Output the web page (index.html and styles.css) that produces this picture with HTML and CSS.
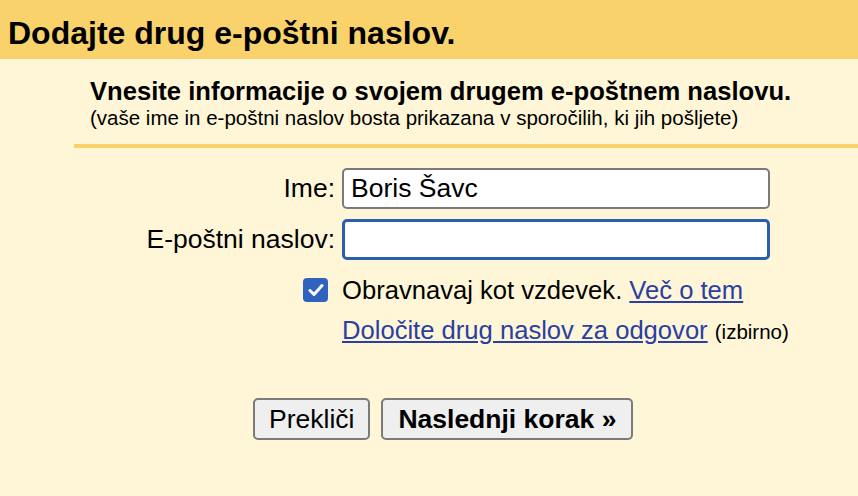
FILE: index.html
```html
<!DOCTYPE html>
<html lang="sl">
<head>
  <meta charset="UTF-8">
  <title>Dodajte drug e-poštni naslov</title>
  <link rel="stylesheet" href="styles.css">
</head>
<body>
  <h1 class="title">Dodajte drug e-poštni naslov.</h1>

  <div class="intro">
    <h2>Vnesite informacije o svojem drugem e-poštnem naslovu.</h2>
    <p>(vaše ime in e-poštni naslov bosta prikazana v sporočilih, ki jih pošljete)</p>
  </div>

  <form class="form">
    <div class="row">
      <label class="label" for="name">Ime:</label>
      <input class="field" type="text" id="name" value="Boris Šavc">
    </div>
    <div class="row">
      <label class="label" for="email">E-poštni naslov:</label>
      <input class="field focused" type="text" id="email">
    </div>
    <div class="row check-row">
      <div class="label">
        <span class="checkbox">
          <svg width="16" height="14" viewBox="0 0 16 14"><path d="M2 7.5 L6 11.5 L14 2.5" fill="none" stroke="#fff" stroke-width="3" stroke-linecap="round" stroke-linejoin="round"/></svg>
        </span>
      </div>
      <div class="text">Obravnavaj kot vzdevek. <a href="#">Več o tem</a></div>
    </div>
    <div class="row link-row">
      <div class="label"></div>
      <div class="text"><a href="#">Določite drug naslov za odgovor</a> <small>(izbirno)</small></div>
    </div>

    <div class="buttons">
      <button type="button">Prekliči</button>
      <button type="button" class="primary">Naslednji korak »</button>
    </div>
  </form>
</body>
</html>
```

FILE: styles.css
```css
body {
  margin: 0;
  font-family: "Liberation Sans", Arial, sans-serif;
  background: #fef6d7;
  color: #000;
  height: 496px;
  overflow: hidden;
}

.title {
  margin: 0;
  background: #f9d26b;
  height: 59px;
  padding: 4px 0 0 8px;
  font-size: 32px;
  font-weight: bold;
  line-height: 58px;
  box-sizing: border-box;
  white-space: nowrap;
  overflow: hidden;
}

.intro {
  margin-left: 74px;
  padding: 17px 0 0 16px;
  height: 68px;
  border-bottom: 4px solid #f8d26a;
  white-space: nowrap;
}

.intro h2 {
  margin: 0;
  font-size: 25.6px;
  line-height: 30px;
}

.intro p {
  margin: 0;
  font-size: 20.5px;
  line-height: 24px;
}

.form {
  padding-top: 20px;
}

.row {
  display: flex;
  align-items: center;
  gap: 7px;
  margin-bottom: 10px;
  white-space: nowrap;
}

.label {
  width: 335px;
  text-align: right;
  font-size: 26.5px;
  flex-shrink: 0;
}

.field {
  width: 428px;
  height: 41px;
  box-sizing: border-box;
  border: 2px solid #7a7a7a;
  border-radius: 5px;
  background: #fff;
  font-family: inherit;
  font-size: 26.5px;
  padding: 0 7px;
  outline: none;
}

.field.focused {
  border: 3px solid #2b5fae;
}

.check-row {
  height: 24px;
  margin-top: 18px;
}

.checkbox {
  display: inline-flex;
  align-items: center;
  justify-content: center;
  width: 25px;
  height: 24px;
  background: #2f63bd;
  border-radius: 4px;
  margin-right: 7px;
  vertical-align: top;
}

.check-row .label {
  line-height: 24px;
  height: 24px;
}

.text {
  font-size: 25.6px;
  line-height: 30px;
}

.text a {
  color: #2a3fa4;
  text-decoration: underline;
}

.text small {
  font-size: 20.5px;
}

.link-row {
  margin-top: 13px;
}

.buttons {
  display: flex;
  gap: 11px;
  padding-left: 253px;
  margin-top: 51px;
}

button {
  height: 42px;
  padding: 0 14px;
  background: #efefef;
  border: 2px solid #7a7a7a;
  border-radius: 5px;
  font-family: inherit;
  font-size: 26.5px;
  color: #000;
}

button.primary {
  font-weight: bold;
  padding: 0 15px;
}
```
